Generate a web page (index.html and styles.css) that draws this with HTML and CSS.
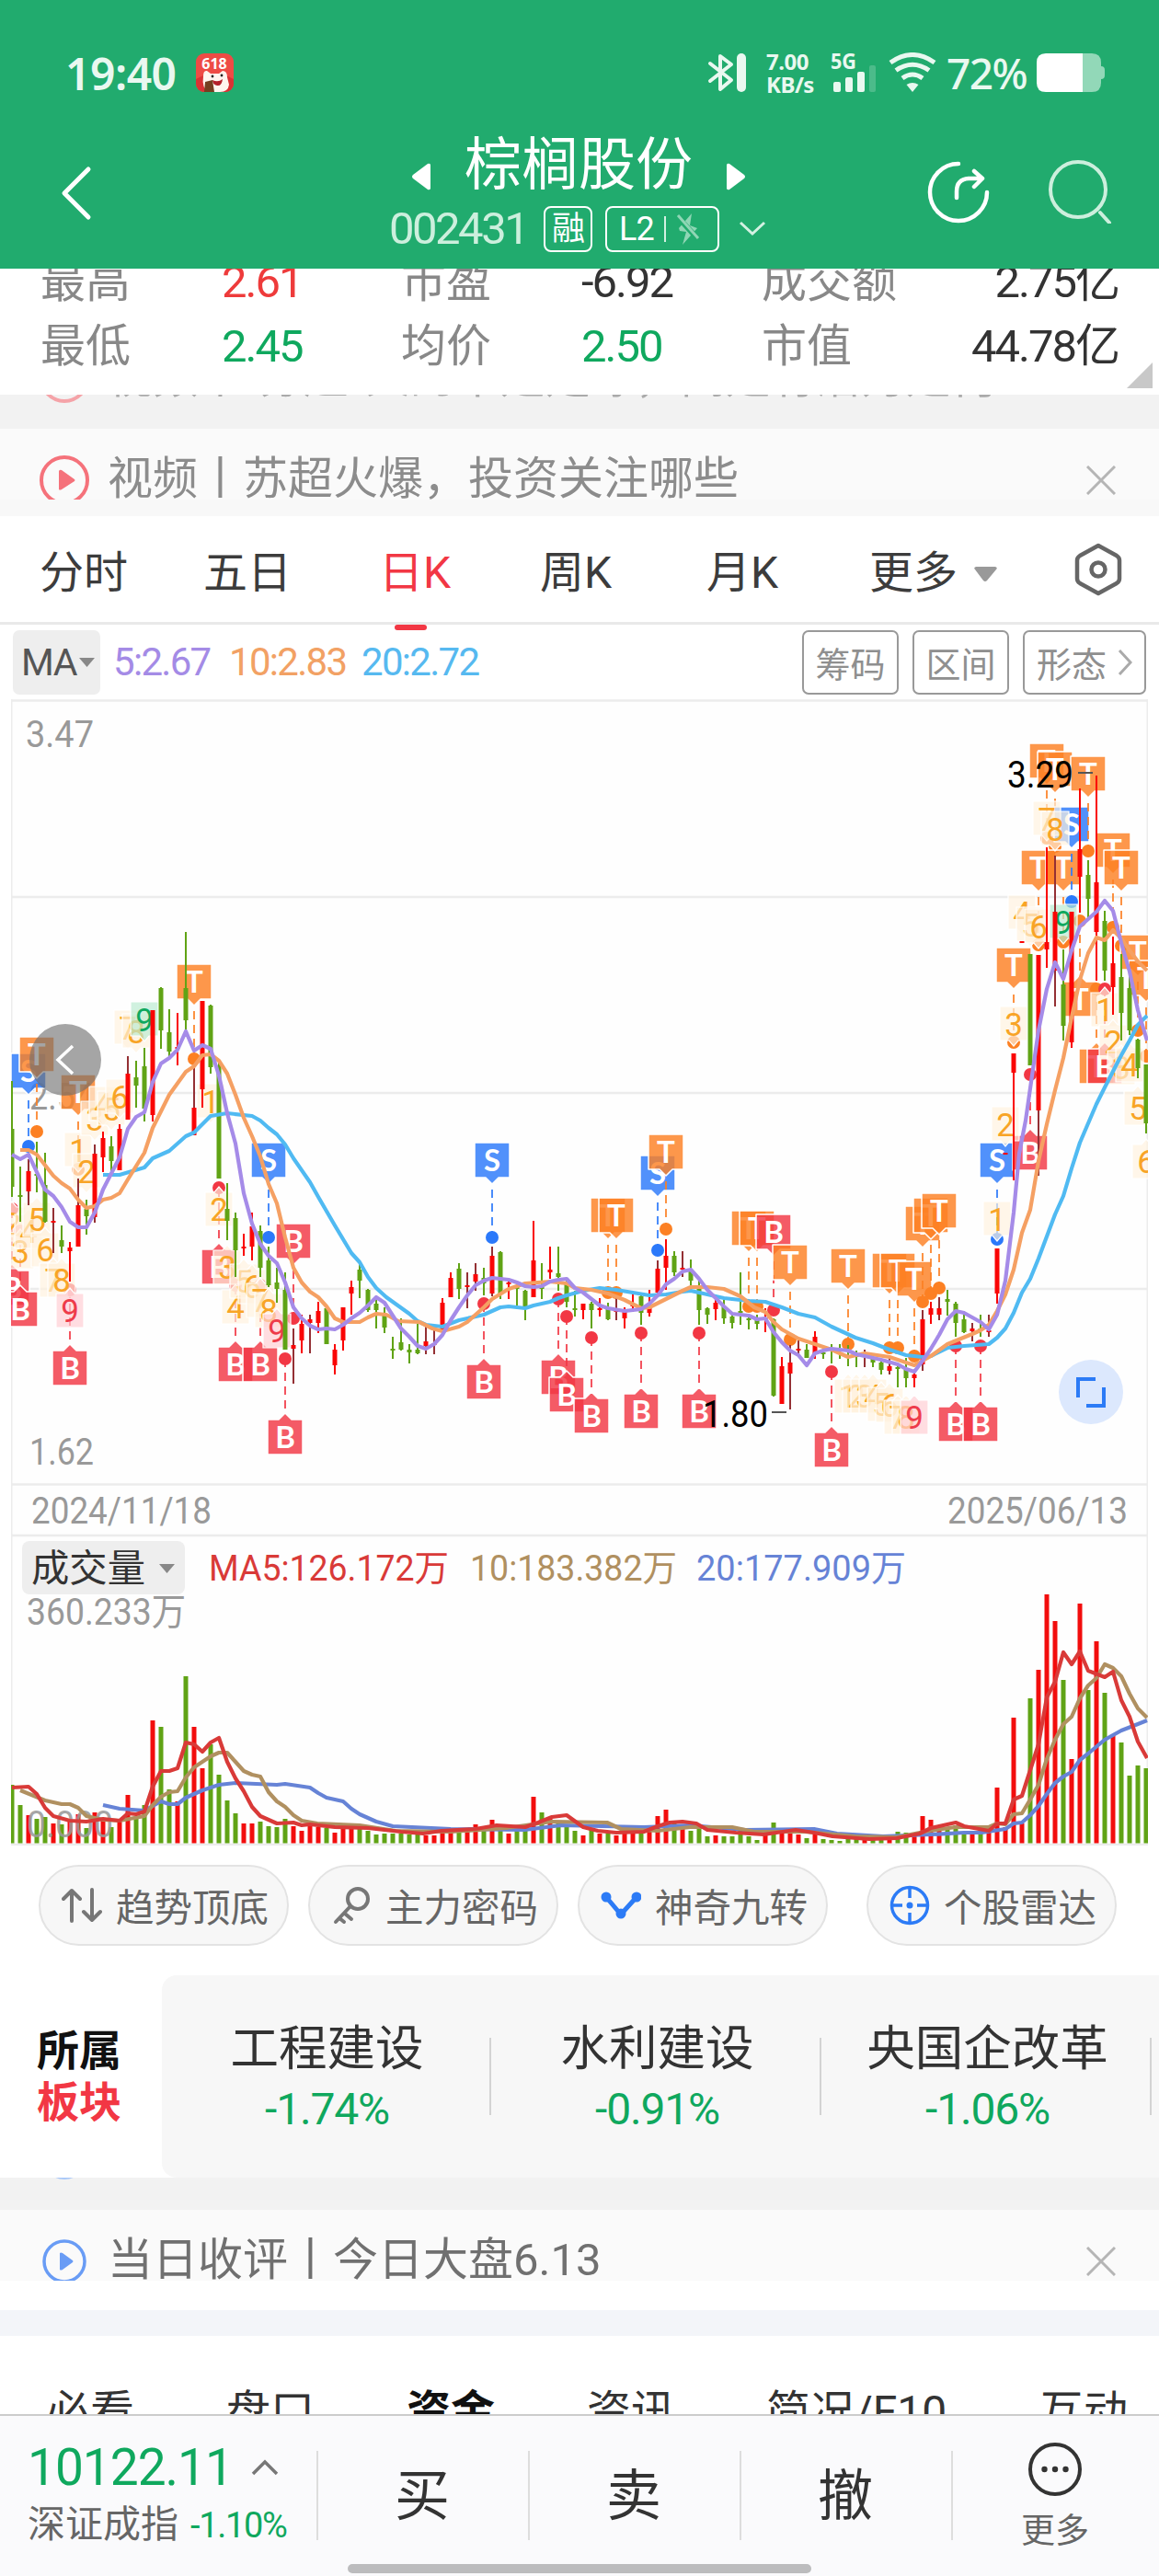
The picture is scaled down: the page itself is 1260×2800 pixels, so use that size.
FILE: index.html
```html
<!DOCTYPE html>
<html lang="zh-CN">
<head>
<meta charset="utf-8">
<title>棕榈股份 002431</title>
<link rel="stylesheet" href="styles.css">
</head>
<body>
<div class="screen">
<header class="top">
  <div class="status">
    <span class="clock">19:40</span>
    <svg class="app" width="41" height="42" viewBox="0 0 41 42"><rect width="41" height="42" rx="9" fill="#ee4b45"/><path d="M0 28Q20 16 41 28V33a9 9 0 0 1-9 9H9a9 9 0 0 1-9-9z" fill="#d93234"/><path d="M8 25q0-7 4-6l4 3h9l4-3q5 0 5 7l2 8q-1 8-10 8H14Q6 38 8 25z" fill="#fff5ef"/><circle cx="18" cy="25" r="1.4" fill="#222"/><circle cx="28" cy="24" r="1.4" fill="#222"/><path d="M18 29q6 3 11-1-1 8-6 7t-5-6z" fill="#b5202a"/><path d="M10 31l8-2 2 13H9z" fill="#744020"/><text x="20" y="17" text-anchor="middle" class="app-text">618</text></svg>
    <span class="grow"></span>
    <svg class="bt" width="44" height="44" viewBox="0 0 44 44" fill="none" stroke="#e9f8f0" stroke-width="4" stroke-linecap="round" stroke-linejoin="round"><path d="M3 12l23 18-12 10V4l12 9L3 31"/><path d="M37 6v32" stroke-width="10"/></svg>
    <div class="net"><span>7.00</span><span>KB/s</span></div>
    <svg class="sig" width="50" height="44" viewBox="0 0 50 44" fill="#e9f8f0"><text x="0" y="18" class="sig-text" textLength="28" lengthAdjust="spacingAndGlyphs">5G</text><rect x="3" y="32" width="8" height="11" rx="2"/><rect x="16" y="27" width="8" height="16" rx="2"/><rect x="29" y="21" width="8" height="22" rx="2"/><rect x="42" y="14" width="7" height="29" rx="2" opacity=".22"/></svg>
    <svg class="wifi" width="52" height="44" viewBox="0 0 52 44" fill="none" stroke="#e9f8f0" stroke-width="5"><path d="M2 11Q26-6 50 11M8 19.500Q26 7 44 19.500M15 28Q26 20 37 28"/><path d="M26 43l-6.500-8q6.500-4 13 0z" fill="#e9f8f0" stroke="none"/></svg>
    <span class="pct">72%</span>
    <svg class="bat" width="75" height="42" viewBox="0 0 75 42"><path d="M50 0h10q10 0 10 10v4q4 0 4 4v6q0 4-4 4v4q0 10-10 10H50z" fill="#92d8b8"/><path d="M10 0h40v42H10Q0 42 0 32V10Q0 0 10 0z" fill="#fff"/></svg>
  </div>
  <div class="nav">
    <svg class="back" width="36" height="60" viewBox="0 0 36 60" fill="none" stroke="#fff" stroke-width="5" stroke-linecap="round" stroke-linejoin="round"><path d="M31 4L5 30l26 26"/></svg>
    <div class="name-block">
      <div class="name"><svg width="20" height="30" viewBox="0 0 20 30"><path d="M20 2v26q-1 2-3 1L1 17q-2-2 0-4L17 1q2-1 3 1z" fill="#fff"/></svg><span>棕榈股份</span><svg width="20" height="30" viewBox="0 0 20 30"><path d="M0 2v26q1 2 3 1l16-12q2-2 0-4L3 1Q1 0 0 2z" fill="#fff"/></svg></div>
      <div class="code"><span class="num">002431</span><span class="tag">融</span><span class="tag l2"><b>L2</b><i></i><svg width="26" height="36" viewBox="0 0 26 36" fill="#8fd6b5"><path d="M17 1L3 17l1 3 7 1-4 14L23 17l-8-3z"/><path d="M1 4l23 25" stroke="#21ab6e" stroke-width="6"/><path d="M2 3l22 25" stroke="#8fd6b5" stroke-width="3"/></svg></span><svg class="chev" width="30" height="18" viewBox="0 0 30 18" fill="none" stroke="#d3f1e2" stroke-width="3"><path d="M2 2l13 12L28 2"/></svg></div>
    </div>
    <svg class="share" width="68" height="68" viewBox="0 0 68 68" fill="none" stroke="#fff" stroke-width="4.500" stroke-linecap="round" stroke-linejoin="round"><path d="M34 3A31 31 0 1 0 65 34M32 40v-7q0-13 13-14h14M51 11l9 8-9 9"/></svg>
    <svg class="search" width="70" height="70" viewBox="0 0 70 70" fill="none" stroke="#ccefdd" stroke-width="4" stroke-linecap="round"><circle cx="33" cy="33" r="30"/><path d="M57 58l10 11"/></svg>
  </div>
</header>

<section class="quote">
  <div class="qrow"><span>最高</span><b class="red">2.61</b><span>市盈</span><b>-6.92</b><span>成交额</span><b class="end">2.75亿</b></div>
  <div class="qrow"><span>最低</span><b class="green">2.45</b><span>均价</span><b class="green">2.50</b><span>市值</span><b class="end">44.78亿</b></div>
  <svg class="corner" width="28" height="28"><path d="M28 0v28H0z" fill="#c8c8c8"/></svg>
</section>

<section class="ticker">
  <div class="peek"><svg width="56" height="56" viewBox="0 0 56 56"><circle cx="28" cy="28" r="25" fill="none" stroke="#f5a3a8" stroke-width="4"/></svg><span>视频丨“苏超”火的不是足球，高是有活力是何</span></div>
  <div class="news"><svg width="56" height="56" viewBox="0 0 56 56"><circle cx="28" cy="28" r="25" fill="none" stroke="#f5727b" stroke-width="4"/><path d="M22 18v20q1 1 3 0l14-9q1-1 0-2L25 17q-2-1-3 1z" fill="#f5727b"/></svg><span>视频丨苏超火爆，投资关注哪些</span><svg class="x" width="32" height="32" viewBox="0 0 32 32"><path d="M1 1l30 30M31 1L1 31" stroke="#b5b5b5" stroke-width="3"/></svg></div>
</section>

<nav class="tabs">
  <span>分时</span><span>五日</span><span class="on">日K</span><span>周K</span><span>月K</span><span>更多<svg width="25" height="16" viewBox="0 0 25 16"><path d="M2 0h21q3 1 1 3L14 15q-2 2-4 0L1 3Q-1 1 2 0z" fill="#999"/></svg></span>
  <svg class="hex" width="54" height="58" viewBox="0 0 54 58" fill="none" stroke="#666" stroke-width="4.500" stroke-linejoin="round"><path d="M27 3l20 11q3 2 3 5v20q0 3-3 5L27 55 7 44q-3-2-3-5V19q0-3 3-5z"/><circle cx="27" cy="29" r="7.500"/></svg>
</nav>

<div class="ma">
  <span class="ma-pick">MA<svg width="17" height="10"><path d="M0 0h17L8.500 10z" fill="#888"/></svg></span>
  <span class="m5">5:2.67</span><span class="m10">10:2.83</span><span class="m20">20:2.72</span>
  <span class="grow"></span>
  <span class="btn">筹码</span><span class="btn">区间</span><span class="btn wide">形态<svg width="16" height="30" viewBox="0 0 16 30"><path d="M2 2l12 13L2 28" fill="none" stroke="#aaa" stroke-width="3"/></svg></span>
</div>

<svg id="chart" class="chart" width="1236" height="1246" viewBox="12 760 1236 1246"></svg>

<div class="pills">
  <span class="pill"><svg width="44" height="38" viewBox="0 0 44 38" fill="none" stroke="#777" stroke-width="4" stroke-linecap="round" stroke-linejoin="round"><path d="M11 36V3M2 12l9-9 9 9M33 2v33M24 26l9 9 9-9"/></svg>趋势顶底</span>
  <span class="pill"><svg width="44" height="44" viewBox="0 0 44 44" fill="none" stroke="#777" stroke-width="4" stroke-linecap="round"><circle cx="29" cy="15" r="11"/><path d="M21 23L5 40M15 31l7 6M9 36l5 4"/></svg>主力密码</span>
  <span class="pill"><svg width="44" height="30" viewBox="0 0 44 30" fill="#2c7bf6"><path d="M6 6l16 19L39 6" fill="none" stroke="#2c7bf6" stroke-width="5"/><circle cx="6" cy="6" r="5.500"/><circle cx="39" cy="6" r="5.500"/><circle cx="22" cy="24" r="5.500"/></svg>神奇九转</span>
  <i></i>
  <span class="pill"><svg width="44" height="44" viewBox="0 0 44 44" fill="none" stroke="#2c7bf6" stroke-width="3.500"><circle cx="22" cy="22" r="19.500"/><path d="M22 3v11M22 30v11M3 22h11M30 22h11"/><circle cx="22" cy="22" r="3.500" fill="#2c7bf6" stroke="none"/></svg>个股雷达</span>
</div>

<section class="sectors">
  <div class="own"><span>所属</span><span class="hot">板块</span></div>
  <div class="cards">
    <div class="card"><span>工程建设</span><b>-1.74%</b></div>
    <div class="card"><span>水利建设</span><b>-0.91%</b></div>
    <div class="card"><span>央国企改革</span><b>-1.06%</b></div>
  </div>
</section>

<section class="ticker second">
  <div class="peek"><svg width="56" height="56" viewBox="0 0 56 56"><circle cx="28" cy="28" r="22" fill="none" stroke="#a9c8f8" stroke-width="4"/></svg><span>当日收评丨6.13今日收评，如何看待行情的后续</span></div>
  <div class="news"><svg width="56" height="56" viewBox="0 0 56 56"><circle cx="28" cy="28" r="22" fill="none" stroke="#699cf5" stroke-width="3.500"/><path d="M23 19v18q1 1 3 0l11-8q1-1 0-2l-11-8q-2-1-3 0z" fill="#699cf5"/></svg><span>当日收评丨今日大盘6.13</span><svg class="x" width="32" height="32" viewBox="0 0 32 32"><path d="M1 1l30 30M31 1L1 31" stroke="#b5b5b5" stroke-width="3"/></svg></div>
</section>

<nav class="lower"><span>必看</span><span>盘口</span><span class="on">资金</span><span>资讯</span><span>简况/F10</span><span>互动</span></nav>

<footer class="bottom">
  <div class="index"><div class="pt">10122.11<svg width="30" height="18" viewBox="0 0 30 18"><path d="M2 16L15 3l13 13" fill="none" stroke="#777" stroke-width="3.500"/></svg></div><div class="nm">深证成指<b>-1.10%</b></div></div>
  <span class="act">买</span><span class="act">卖</span><span class="act">撤</span>
  <div class="more"><svg width="60" height="60" viewBox="0 0 60 60"><circle cx="30" cy="30" r="27" fill="none" stroke="#333" stroke-width="4"/><g fill="#333"><circle cx="18.500" cy="30" r="3.200"/><circle cx="30" cy="30" r="3.200"/><circle cx="41.500" cy="30" r="3.200"/></g></svg><span>更多</span></div>
  <div class="home"></div>
</footer>
</div>
<script src="chart.js"></script>
</body>
</html>
```
FILE: styles.css
```css
*{box-sizing:border-box}
body{margin:0;background:#fff;font-family:Roboto,"Noto Sans CJK SC",sans-serif;color:#333}
.screen{width:1260px;height:2800px;overflow:hidden}
svg{display:block;flex:none}
.grow{flex:1}
b{font-weight:400}
.top{height:292px;background:#21ab6e;color:#fff}
.status{height:158px;display:flex;align-items:center;padding:0 66px 0 71px;font-family:"Noto Sans",sans-serif;color:#e9f8f0}
.clock{font-size:48px;font-weight:600;letter-spacing:-.5px;width:142px}
.app-text{font:700 16px "Noto Sans",sans-serif;fill:#fff}
.net{display:flex;flex-direction:column;font-size:24px;line-height:25px;font-weight:700;margin:0 20px 0 20px;width:50px;letter-spacing:-.5px;white-space:nowrap}
.sig-text{font:700 23px "Noto Sans",sans-serif}
.wifi{margin-left:13px}
.pct{font-size:46px;font-weight:500;margin-left:11px;width:98px;letter-spacing:-1.500px}
.status .bat{margin-right:-8px}
.nav{height:134px;display:flex;align-items:flex-start;padding-left:65px}
.back{margin-top:22px}
.name-block{width:410px;margin-left:322px;height:134px}
.name{display:flex;align-items:center;font-size:62px;line-height:62px;height:54px;margin-left:25px;gap:37px}
.name span{letter-spacing:0;position:relative;top:-5px}
.name svg{margin-top:13px}
.code{display:flex;align-items:center;height:50px;margin-top:12px}
.num{font-size:49px;line-height:50px;letter-spacing:-2.500px;color:#ccefdd;width:169px}
.tag{height:50px;width:53px;border:2px solid #fff;border-radius:8px;font-size:36px;line-height:46px;text-align:center}
.l2{width:124px;margin-left:14px;display:flex;align-items:center;padding-left:9px}
.l2 b{font-size:36px;letter-spacing:-1px;width:45px}
.l2 i{width:2px;height:28px;background:#d3f1e2;margin:0 11px 0 8px}
.chev{margin-left:21px}
.share{margin-left:175px;margin-top:17px}
.search{margin-left:63px;margin-top:15px}
.quote{height:137px;overflow:hidden;position:relative;padding:0 44px}
.qrow{display:grid;grid-template-columns:197px 195px 196px 196px 160px 228px;font-size:49px;line-height:70px;height:70px;margin-top:0;position:relative;top:-20px;white-space:nowrap}
.qrow span{color:#888}
.qrow b{letter-spacing:-2px}
.qrow .end{text-align:right}
.red{color:#ee3b3b}
.green{color:#0fa85e}
.corner{position:absolute;right:7px;bottom:7px}
.ticker{height:132px;background:#f8f8f8}
.peek{height:37px;background:#f2f2f2;overflow:hidden;display:flex;align-items:flex-start;padding-left:42px;font-size:49px;line-height:56px;color:#aaa;white-space:nowrap}
.peek span,.news span{margin-left:19px}
.peek>*{margin-top:-46px}
.news{height:77px;background:#fafafa;overflow:hidden;display:flex;align-items:flex-start;padding:28px 0 0 42px;font-size:49px;line-height:56px;color:#8c8c8c;position:relative}
.news>span{margin-top:-1px}
.x{margin:12px 47px 0 auto}
.tabs{height:118px;border-bottom:3px solid #e9e9e9;padding:0 0 0 43px;display:grid;grid-template-columns:178px 191px 175px 181px 177px 221px 54px;font-size:48px;line-height:124px;color:#3c3c3c}
.tabs .on{color:#f23744;position:relative}
.tabs .on:after{content:"";position:absolute;left:17px;bottom:0;width:35px;height:6px;border-radius:3px;background:#f23744}
.tabs span svg{display:inline-block;margin-left:18px;vertical-align:7px}
.hex{margin-top:29px;margin-left:1px}
.ma{height:81px;display:flex;align-items:center;padding:0 14px;font-size:42px;white-space:nowrap}
.ma-pick{width:95px;height:70px;border-radius:7px;background:#eee;color:#555;padding-left:9px;display:flex;align-items:center;gap:3px;font-size:41px;letter-spacing:-1.500px}
.ma>span:not(.grow){flex:none}
.m5,.m10,.m20{letter-spacing:-1.700px;margin-left:14px}
.m5{color:#a48be6;width:112px}.m10{color:#f2a164;width:130px}.m20{color:#56b9f0}
.btn{width:105px;height:70px;border:2px solid #999;border-radius:7px;color:#8f8f8f;font-size:38px;display:flex;align-items:center;justify-content:center;margin-left:15px}
.wide{width:134px;gap:12px}
.chart{margin-left:12px}
.axis{fill:#999;font-size:40px}
.pills{height:141px;padding:21px 46px 0 42px;display:flex;gap:21px}
.pill{height:88px;width:272px;border:2px solid #e3e3e3;border-radius:44px;background:#f7f7f7;color:#666;font-size:41.500px;display:flex;align-items:center;padding-left:23px;gap:15px;white-space:nowrap;flex:none}
.pills i{width:4px;height:56px;background:#e2e2e2;margin:16px 0 0}
.sectors{height:220px;display:flex}
.own{width:176px;padding:54px 0 0 40px;font-size:46px;font-weight:700;line-height:56px;display:flex;flex-direction:column;color:#111}
.hot{color:#f23744}
.cards{display:flex;flex:1;background:#f7f7f7;border-radius:16px 0 0 16px;overflow:hidden}
.card{width:359px;flex:none;display:flex;flex-direction:column;align-items:center;padding-top:44px;font-size:52.500px;line-height:72px;position:relative}
.card b{font-size:48px;line-height:60px;color:#0fa85e;letter-spacing:-1.200px}
.card:after{content:"";position:absolute;right:1px;top:68px;width:2px;height:84px;background:#d3d3d3}
.second{height:257px;background:linear-gradient(#fff 0 144px,#f3f5f9 144px 172px,#fff 172px)}
.second .peek{height:35px}
.second .peek>*{margin-top:-50px}
.second .news{color:#707070}
.second .x{margin-top:12px}
.lower{margin-top:-30px;height:30px;overflow:hidden;padding-left:50px;display:grid;grid-template-columns:196px 196px 196px 195px 297px 130px;font-size:48px;line-height:56px;white-space:nowrap;color:#333}
.lower .on{font-weight:700;color:#111}
.bottom{height:176px;border-top:2px solid #ccc;background:#fafafc;display:flex;position:relative}
.index{width:344px;padding:28px 0 0 30px;white-space:nowrap}
.pt{display:flex;align-items:center;gap:20px;font-size:55px;line-height:56px;color:#0fa85e;letter-spacing:-1px}
.nm{font-size:41px;line-height:60px;color:#666;margin-top:4px}
.nm b{font-size:38px;color:#0fa85e;letter-spacing:-1.300px;margin-left:13px}
.act{width:230px;text-align:center;font-size:60px;line-height:100px;height:174px;padding-top:38px;position:relative}
.act:before,.more:before{content:"";position:absolute;left:0;top:38px;width:2px;height:97px;background:#ddd}
.more{width:226px;display:flex;flex-direction:column;align-items:center;padding-top:28px;font-size:37px;line-height:54px;color:#666;position:relative}
.more span{margin-top:11px}
.home{position:absolute;left:378px;bottom:3px;width:504px;height:10px;border-radius:5px;background:#bcbcbe}
```
FILE: chart.js
```js
// colour (g fall, r rise, d rise with dark wick), high, body top, body bottom, low, volume top
const bars = `g 1175 1227 1290 1301 1940
g 1268 1299 1301 1328 1962
d 1260 1273 1295 1310 1973
g 1241 1276 1278 1296 1977
g 1253 1288 1328 1329 1975
d 1313 1327 1329 1362 1982
g 1332 1348 1355 1362 1983
r 1350 1356 1360 1393 1978
d 1281 1310 1355 1355 1972
g 1304 1314 1322 1342 1987
d 1244 1254 1323 1329 1970
r 1230 1237 1258 1274 1977
g 1235 1246 1262 1274 1986
r 1222 1227 1272 1272 1978
d 1148 1167 1217 1217 1951
g 1153 1171 1180 1204 1976
g 1139 1159 1205 1219 1962
r 1098 1098 1212 1219 1870
g 1073 1074 1120 1140 1877
g 1097 1122 1143 1148 1945
r 1101 1138 1140 1158 1958
g 1013 1074 1109 1119 1822
d 1160 1204 1234 1234 1877
r 1088 1088 1184 1204 1922
g 1092 1093 1160 1167 1896
g 1152 1158 1281 1281 1929
g 1286 1314 1327 1348 1957
g 1318 1324 1359 1388 1971
r 1341 1355 1357 1365 1982
r 1318 1333 1355 1370 1982
g 1332 1338 1378 1388 1980
g 1355 1370 1397 1399 1985
g 1378 1394 1401 1416 1986
g 1383 1402 1467 1467 1977
d 1444 1462 1466 1504 1985
r 1429 1439 1457 1471 1990
d 1429 1434 1438 1471 1985
r 1415 1425 1438 1449 1986
g 1421 1422 1461 1461 1987
r 1461 1467 1484 1494 1992
r 1421 1421 1457 1468 1987
r 1392 1399 1406 1429 1988
g 1372 1380 1392 1411 1987
g 1401 1402 1424 1426 1990
g 1413 1417 1424 1444 1994
g 1421 1429 1443 1449 1993
g 1453 1466 1468 1477 1993
g 1433 1459 1467 1468 1993
g 1461 1467 1470 1482 1994
g 1439 1467 1471 1472 1993
d 1442 1458 1463 1472 1995
d 1445 1460 1462 1472 1995
r 1411 1416 1447 1453 1986
r 1383 1389 1410 1410 1992
g 1373 1379 1401 1412 1990
d 1383 1397 1399 1422 1991
d 1373 1385 1393 1403 1983
g 1378 1389 1395 1408 1989
d 1355 1365 1406 1409 1978
g 1360 1361 1407 1412 1984
r 1392 1394 1396 1412 1993
g 1392 1398 1401 1419 1988
g 1402 1403 1422 1435 1989
r 1327 1370 1410 1410 1953
g 1373 1398 1401 1412 1970
r 1355 1380 1383 1390 1977
g 1355 1384 1388 1403 1979
g 1390 1395 1415 1421 1985
g 1403 1422 1424 1431 1990
r 1417 1417 1424 1434 1995
g 1415 1417 1424 1444 1988
r 1411 1422 1424 1431 1993
g 1416 1422 1434 1435 1993
d 1410 1424 1426 1435 1995
r 1421 1426 1433 1444 1993
r 1407 1418 1420 1426 1993
g 1408 1409 1427 1440 1990
r 1402 1420 1427 1431 1985
d 1370 1379 1405 1407 1974
r 1347 1365 1378 1402 1967
g 1360 1365 1383 1387 1982
d 1360 1378 1380 1388 1986
g 1369 1380 1392 1397 1990
g 1390 1397 1424 1440 1985
g 1421 1422 1429 1439 1996
r 1408 1416 1423 1435 1995
g 1412 1420 1433 1439 1996
g 1427 1431 1438 1444 1996
g 1383 1425 1427 1440 1988
g 1428 1433 1435 1445 1996
g 1429 1434 1439 1445 2000
r 1422 1432 1434 1448 1995
g 1433 1434 1517 1518 1981
r 1475 1485 1526 1526 1989
d 1462 1481 1493 1532 1991
d 1456 1466 1468 1472 1994
g 1461 1467 1476 1476 1998
r 1447 1453 1472 1477 1993
g 1465 1470 1472 1477 1999
g 1461 1467 1468 1482 2000
g 1461 1468 1469 1477 2001
g 1462 1468 1469 1485 1999
g 1468 1474 1475 1486 1999
d 1467 1474 1475 1486 1998
g 1472 1477 1481 1486 1999
g 1477 1481 1489 1494 1998
d 1476 1485 1490 1494 1998
g 1485 1486 1488 1508 1991
g 1476 1489 1498 1508 1992
r 1488 1494 1498 1508 1993
d 1424 1434 1483 1490 1974
r 1415 1422 1429 1439 1978
d 1410 1422 1429 1435 1985
g 1402 1412 1415 1430 1989
g 1415 1417 1438 1453 1984
g 1425 1434 1448 1449 1991
d 1438 1444 1447 1458 1994
g 1429 1444 1446 1453 1993
d 1429 1446 1448 1453 1990
r 1357 1357 1406 1417 1943
r 1254 1253 1255 1254 1986
r 1145 1145 1166 1283 1867
r 1024 1023 1025 1024 1982
g 1037 1037 1158 1158 1846
d 1038 1038 1207 1278 1815
r 921 1024 1032 1052 1733
d 930 991 1055 1094 1762
g 1032 1070 1115 1131 1826
r 991 991 1133 1139 1912
r 857 923 953 992 1743
g 935 951 977 997 1837
r 843 959 1013 1066 1784
g 990 1001 1055 1066 1840
r 1018 1047 1073 1103 1886
g 1037 1062 1101 1131 1894
g 1055 1074 1120 1125 1930
g 1129 1130 1161 1172 1919
g 1157 1157 1221 1232 1922`.split('\n').map(s => s.split(' '));

// letter, x, box top, direction of pointer, dot y
const flags = `S 31 1145 d 1246
T 40 1127 d 1230
T 85 1168 d 1271
B 13 1381 u 1314
B 22 1404 u 1338
B 76 1468 u 1402
T 211 1048 d 1151
S 292 1242 d 1345
B 238 1358 u 1291
B 256 1464 u 1397
B 283 1464 u 1397
B 310 1543 u 1477
B 319 1330 d 1433
S 535 1242 d 1345
B 526 1483 u 1417
B 607 1478 u 1412
B 616 1497 u 1431
B 643 1520 u 1454
B 697 1515 u 1449
B 760 1515 u 1449
T 661 1302 d 1405
T 670 1302 d 1405
S 715 1256 d 1359
T 724 1233 d 1336
T 814 1316 d 1420
T 823 1316 d 1420
B 841 1320 d 1424
T 859 1353 d 1456
T 922 1357 d 1461
T 967 1362 d 1465
T 976 1362 d 1465
T 994 1371 d 1474
T 1003 1311 d 1415
T 1012 1302 d 1406
T 1021 1297 d 1400
B 904 1557 u 1491
B 1039 1529 u 1463
B 1066 1529 u 1463
S 1084 1242 d 1347
T 1102 1030 d 1133
B 1120 1234 u 1168
T 1129 924 d 1027
T 1138 808 d 911
T 1147 817 d 920
T 1156 924 d 1024
S 1165 877 d 980
T 1183 822 d 925
T 1174 1067 u 1001
T 1192 1140 u 1075
B 1201 1140 u 1075
T 1210 905 d 1008
T 1219 924 d 1028
T 1237 1016 d 1120
T 1246 1044 d 1148`.split('\n').map(s => s.split(' '));

// nine-turn counters: digit, x, y centre, kind (o count, p low nine, n high nine), pointer
const counts = `2 13 1330 o u
3 22 1360 o u
4 31 1338 o u
5 40 1325 o u
6 49 1358 o u
7 58 1391 o u
8 67 1391 o u
9 76 1424 p u
1 85 1250 o d
2 94 1273 o d
3 103 1216 o d
4 112 1200 o d
5 121 1205 o d
6 130 1192 o d
7 139 1117 o d
8 148 1121 o d
9 157 1108 n d
1 229 1197 o d
2 238 1314 o u
3 247 1377 o u
4 256 1420 o u
5 265 1392 o u
6 274 1398 o u
7 283 1413 o u
8 292 1424 o u
9 301 1446 p u
1 922 1517 o u
2 931 1517 o u
3 940 1517 o u
4 949 1517 o u
5 958 1526 o u
6 967 1527 o u
7 976 1540 o u
8 985 1540 o u
9 994 1540 p u
1 1084 1325 o d
2 1093 1222 o d
3 1102 1113 o d
4 1111 992 o d
5 1120 1005 o d
6 1129 1007 o d
7 1138 890 o d
8 1147 901 o d
9 1156 1002 n d
1 1201 1097 o u
2 1210 1132 o u
3 1219 1160 o u
4 1228 1157 o u
5 1237 1204 o u
6 1246 1262 o u`.split('\n').map(s => s.split(' '));

const lines = [
 ['#50baf2', 4.2, '112,1277 130,1277 157,1269 166,1259 184,1251 202,1235 211,1231 229,1213 247,1210 274,1213 283,1218 292,1226 301,1233 310,1244 319,1259 337,1285 346,1301 364,1332 382,1362 391,1372 400,1388 409,1400 420,1410 445,1428 454,1436 463,1440 481,1442 499,1435 526,1429 544,1421 553,1420 571,1422 580,1419 598,1415 607,1411 616,1408 634,1403 652,1400 670,1402 688,1405 706,1408 724,1407 742,1404 751,1403 769,1407 787,1411 814,1414 832,1415 850,1421 868,1428 886,1432 904,1442 930,1454 949,1460 967,1467 985,1473 1003,1475 1012,1474 1030,1465 1048,1463 1075,1461 1084,1454 1093,1444 1102,1427 1111,1405 1120,1390 1129,1368 1147,1320 1156,1300 1165,1270 1174,1242 1192,1200 1201,1182 1219,1147 1228,1131 1237,1114 1247,1104'],
 ['#f5a063', 4.2, '22,1250 31,1250 40,1255 58,1278 67,1286 76,1292 85,1304 94,1313 103,1311 112,1304 121,1302 130,1297 139,1282 157,1253 166,1226 184,1190 202,1165 211,1159 220,1147 229,1146 238,1153 247,1167 256,1190 265,1215 274,1235 283,1257 292,1287 301,1308 310,1345 319,1378 328,1394 337,1404 346,1410 355,1420 364,1433 373,1437 391,1437 400,1432 409,1428 420,1429 433,1436 456,1437 470,1444 481,1447 499,1442 508,1437 526,1421 535,1412 553,1401 571,1395 598,1393 616,1395 625,1400 643,1402 661,1406 679,1413 697,1422 706,1421 724,1412 742,1403 751,1399 769,1399 787,1401 805,1409 820,1421 832,1426 841,1437 850,1445 868,1455 886,1461 904,1467 922,1475 940,1471 967,1475 985,1481 994,1484 1012,1474 1030,1461 1057,1450 1066,1446 1075,1440 1084,1425 1093,1407 1102,1380 1111,1340 1120,1315 1129,1262 1138,1222 1147,1185 1156,1150 1165,1106 1174,1065 1183,1036 1192,1019 1201,1022 1210,1011 1219,1020 1228,1033 1237,1045 1247,1055'],
 ['#a58be8', 4.2, '13,1255 22,1260 31,1255 49,1293 58,1300 67,1312 76,1328 85,1334 94,1334 103,1318 112,1293 130,1258 139,1227 148,1214 157,1209 166,1176 175,1156 184,1150 193,1141 202,1121 211,1142 220,1136 229,1140 238,1169 247,1210 256,1243 265,1297 274,1330 283,1352 292,1365 301,1373 310,1394 319,1421 328,1433 337,1441 346,1445 355,1444 364,1445 373,1440 382,1433 391,1427 400,1419 409,1410 418,1416 436,1444 445,1453 454,1463 463,1466 472,1461 481,1451 490,1435 499,1421 508,1408 517,1397 526,1392 535,1389 553,1391 562,1394 571,1398 580,1399 589,1398 598,1393 607,1391 616,1390 625,1400 634,1405 643,1412 652,1419 661,1422 679,1425 697,1423 706,1417 715,1408 724,1396 733,1390 742,1382 751,1380 760,1390 769,1402 778,1411 787,1420 796,1428 814,1430 823,1434 832,1433 841,1448 850,1459 859,1468 868,1473 877,1484 886,1471 895,1468 904,1466 922,1468 931,1472 958,1478 976,1483 985,1488 994,1491 1003,1479 1012,1466 1021,1451 1030,1434 1039,1425 1048,1427 1057,1432 1066,1437 1075,1445 1084,1429 1093,1392 1102,1318 1108,1254 1115,1218 1120,1183 1129,1120 1138,1075 1147,1046 1156,1064 1165,1033 1174,1007 1183,999 1192,991 1201,979 1210,990 1219,1025 1228,1056 1237,1098 1247,1131'],
 ['#6683d6', 4.2, '112,1962 130,1966 157,1968 166,1963 175,1958 184,1961 193,1961 202,1954 220,1946 238,1940 256,1938 301,1940 310,1939 337,1943 346,1949 355,1954 373,1958 382,1966 391,1972 409,1980 427,1985 490,1988 570,1989 610,1984 700,1986 750,1984 810,1989 885,1988 910,1993 960,1996 1012,1994 1048,1992 1067,1992 1093,1988 1102,1982 1111,1981 1120,1973 1129,1963 1138,1950 1147,1938 1156,1931 1165,1926 1174,1913 1183,1906 1201,1891 1219,1881 1237,1874 1247,1870'],
 ['#b09060', 4.2, '22,1946 49,1957 67,1961 76,1961 85,1965 94,1974 112,1978 130,1979 157,1974 166,1962 175,1953 184,1948 193,1947 202,1932 211,1921 229,1909 238,1905 247,1905 256,1915 265,1925 274,1929 283,1931 292,1948 301,1958 310,1964 319,1973 328,1979 345,1982 391,1984 430,1990 490,1991 550,1987 600,1980 660,1981 675,1988 715,1990 750,1986 796,1986 820,1991 875,1991 930,1996 975,1997 1010,1990 1039,1986 1075,1986 1084,1982 1093,1983 1102,1972 1111,1971 1120,1956 1129,1940 1138,1912 1147,1891 1156,1874 1165,1866 1174,1846 1183,1832 1192,1824 1201,1809 1210,1813 1219,1822 1228,1841 1237,1857 1247,1867'],
 ['#d93a38', 4.2, '13,1943 31,1942 40,1950 49,1965 58,1974 76,1979 94,1980 112,1977 130,1979 139,1971 148,1972 157,1969 166,1942 175,1925 184,1925 193,1922 202,1894 211,1896 220,1904 229,1894 238,1889 247,1915 256,1933 265,1947 274,1964 283,1974 301,1982 319,1981 328,1984 337,1983 364,1986 400,1987 436,1991 460,1993 480,1990 517,1988 540,1984 571,1986 585,1981 600,1975 616,1973 634,1986 650,1990 670,1992 700,1991 715,1985 728,1981 742,1980 757,1982 769,1989 800,1992 830,1994 865,1989 885,1992 905,1996 945,1999 975,1998 1000,1993 1012,1987 1039,1981 1048,1985 1075,1990 1084,1982 1093,1982 1102,1956 1111,1952 1120,1924 1129,1896 1138,1845 1147,1828 1156,1796 1165,1809 1174,1795 1183,1816 1201,1823 1210,1817 1219,1848 1228,1866 1237,1893 1247,1911']
];

const tone = {S: '#2b79fa', T: '#fc8023', B: '#f23744'};
const label = (x, y, w, t, fill = '#999', size = 40) =>
  `<text x="${x}" y="${y}" textLength="${w}" lengthAdjust="spacingAndGlyphs" font-size="${size}" fill="${fill}">${t}</text>`;

let s = '<rect x="12" y="760" width="1236" height="1246" fill="#fefefe"/>';
for (const y of [761.5, 975, 1188, 1401, 1613.5, 1669, 2005])
  s += `<path d="M12 ${y}h1236" stroke="#ececec" stroke-width="2.500"/>`;
s += '<path d="M12.500 760v1246M1247.500 760v1246" stroke="#ececec" stroke-width="2"/>';

s += label(28, 812, 74, '3.47') + label(32, 1206, 70, '2.54') + label(32, 1592, 70, '1.62');
s += label(34, 1656, 196, '2024/11/18') + label(1030, 1656, 196, '2025/06/13');

for (const [l, xs, ts, dir, ds] of flags) {
  const x = +xs, t = +ts, d = +ds, c = tone[l];
  const tip = dir === 'd' ? t + 51 : t - 12;
  const box = dir === 'd'
    ? `M${x-19} ${t}h38v38h-12l-7 7l-7 -7h-12z`
    : `M${x-19} ${t}h12l7 -7l7 7h12v38h-38z`;
  s += `<path d="M${x} ${tip}V${d}" stroke="${c}" stroke-width="2" stroke-dasharray="9 6" opacity=".85"/>`;
  s += `<circle cx="${x}" cy="${d}" r="7" fill="${c}"/>`;
  s += `<path d="${box}" fill="${c}" fill-opacity=".82" stroke="#fff" stroke-width="1.500" stroke-linejoin="round"/>`;
  s += `<text x="${x}" y="${t + 31}" text-anchor="middle" font-family="Lato" font-weight="700" font-size="33" fill="#fff">${l}</text>`;
}
for (const [n, xs, ys, k, dir] of counts) {
  const x = +xs, y = +ys;
  const bg = {o: '#fff1df', p: '#ffcdd3', n: '#b9ead0'}[k], fg = {o: '#f8a426', p: '#ee3b4a', n: '#0fa85e'}[k];
  const b = dir === 'd' ? `M${x-15} ${y-19}h30v37h-10l-5 6l-5 -6h-10z` : `M${x-15} ${y-18}h10l5 -6l5 6h10v37h-30z`;
  s += `<path d="${b}" fill="${bg}" fill-opacity=".68" stroke="#fff" stroke-width="1.200"/>`;
  s += `<text x="${x}" y="${y + 13}" text-anchor="middle" font-size="35" fill="${fg}">${n}</text>`;
}
bars.forEach(([k, h, a, b, l, v], i) => {
  const x = 13 + 9 * i, c = k === 'g' ? '#60a315' : '#fa0505', w = k === 'd' ? '#943034' : c;
  s += `<path d="M${x} ${h}V${l}" stroke="${w}" stroke-width="2"/>`;
  s += `<rect x="${x - 2.5}" y="${a}" width="5" height="${Math.max(b - a, 1)}" fill="${c}"/>`;
  s += `<rect x="${x - 2.5}" y="${v}" width="5" height="${2003.5 - v}" fill="${k === 'g' ? c : '#f20d0d'}"/>`;
});
s += '<rect x="24" y="1675" width="177" height="58" rx="8" fill="#eee"/>' +
  label(34, 1719, 124, '成交量', '#333', 41) + '<path d="M173 1700h17l-8.500 10z" fill="#888"/>';
s += label(227, 1718, 261, 'MA5:126.172万', '#d93a38', 39) + label(511, 1718, 225, '10:183.382万', '#b09060', 39) + label(757, 1718, 228, '20:177.909万', '#6683d6', 39);
s += label(29, 1766, 173, '360.233万') + label(29, 1997, 94, '0.000', '#9a9a9ae6');
for (const [c, w, p] of lines)
  s += `<polyline points="${p}" fill="none" stroke="${c}" stroke-width="${w}" stroke-linejoin="round"/>`;
s += label(764, 1551, 71, '1.80', '#000') + label(1095, 856, 72, '3.29', '#000');
s += '<path d="M839 1535h16M1172 840h16" stroke="#555" stroke-width="2"/>';
s += '<circle cx="71" cy="1152" r="39" fill="#6e6e6e" fill-opacity=".62"/><path d="M79 1137l-16 15l16 15" fill="none" stroke="#fff" stroke-width="3.500"/>';
s += '<circle cx="1186" cy="1513" r="35" fill="#dce8fd"/><path d="M1191 1499h-19v20M1181 1528h19v-20" fill="none" stroke="#2c7bf6" stroke-width="4"/>';
document.getElementById('chart').innerHTML = s;
```
